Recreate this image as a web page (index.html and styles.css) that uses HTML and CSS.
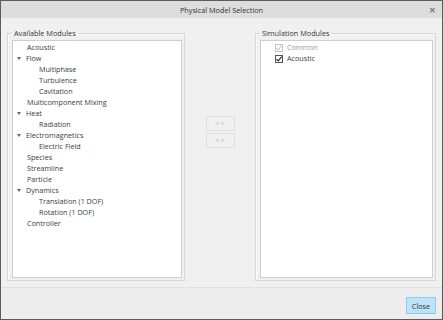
FILE: index.html
```html
<!DOCTYPE html>
<html>
<head>
<meta charset="utf-8">
<link rel="stylesheet" href="styles.css">
</head>
<body>
<div class="window">
  <div class="titlebar">
    <span class="title">Physical Model Selection</span>
    <span class="close-x">✕</span>
  </div>
  <div class="content">
    <fieldset class="group">
      <legend>Available Modules</legend>
      <div class="listbox">
        <div class="row l0">Acoustic</div>
        <div class="row l0 exp"><span class="arrow"></span>Flow</div>
        <div class="row l1">Multiphase</div>
        <div class="row l1">Turbulence</div>
        <div class="row l1">Cavitation</div>
        <div class="row l0">Multicomponent Mixing</div>
        <div class="row l0 exp"><span class="arrow"></span>Heat</div>
        <div class="row l1">Radiation</div>
        <div class="row l0 exp"><span class="arrow"></span>Electromagnetics</div>
        <div class="row l1">Electric Field</div>
        <div class="row l0">Species</div>
        <div class="row l0">Streamline</div>
        <div class="row l0">Particle</div>
        <div class="row l0 exp"><span class="arrow"></span>Dynamics</div>
        <div class="row l1">Translation (1 DOF)</div>
        <div class="row l1">Rotation (1 DOF)</div>
        <div class="row l0">Controller</div>
      </div>
    </fieldset>
    <div class="middle">
      <button class="mv">&gt; &gt;</button>
      <button class="mv">&lt; &lt;</button>
    </div>
    <fieldset class="group">
      <legend>Simulation Modules</legend>
      <div class="listbox">
        <div class="crow disabled"><span class="cb"><svg viewBox="0 0 8 8" width="8" height="8"><path d="M1.5 4.2 L3.2 6 L6.6 1.6" fill="none" stroke="#b8b8b8" stroke-width="1"/></svg></span>Common</div>
        <div class="crow"><span class="cb"><svg viewBox="0 0 8 8" width="8" height="8"><path d="M1.5 4.2 L3.2 6 L6.6 1.6" fill="none" stroke="#222" stroke-width="1.1"/></svg></span>Acoustic</div>
      </div>
    </fieldset>
  </div>
  <div class="footer">
    <button class="close-btn">Close</button>
  </div>
</div>
</body>
</html>
```

FILE: styles.css
```css
* { box-sizing: border-box; }
html, body { margin: 0; padding: 0; }
body {
  font-family: "Open Sans", "Noto Sans", sans-serif;
  font-size: 7.2px;
  color: #3c3c3c;
  background: #fff;
}
.window {
  width: 443px;
  height: 320px;
  border: 1px solid #5c5c5c;
  display: flex;
  flex-direction: column;
  background: #f0f0f0;
}
.titlebar {
  height: 17px;
  background: #dddddd;
  display: flex;
  align-items: center;
  justify-content: center;
  position: relative;
  font-size: 7.3px;
  color: #333;
}
.close-x {
  position: absolute;
  right: 6px;
  top: 3px;
  font-size: 8px;
  color: #777;
  font-weight: bold;
}
.content {
  flex: 1;
  display: grid;
  grid-template-columns: 178px 1fr 181px;
  padding: 9px 6px 6px 6px;
}
.group {
  margin: 0;
  min-width: 0;
  border: 1px solid #d6d6d6;
  box-shadow: inset 1px 1px 0 #fafafa;
  padding: 1px 2px 2px 4px;
  display: flex;
  flex-direction: column;
}
.group legend {
  padding: 0 2px;
  font-size: 7.3px;
  line-height: 12px;
  color: #333;
}
.listbox {
  flex: 1;
  background: #fff;
  border: 1px solid #cfcfcf;
  padding-top: 1px;
}
.row {
  height: 11px;
  line-height: 11px;
  white-space: nowrap;
  display: flex;
  align-items: center;
}
.l0 { padding-left: 14px; }
.l1 { padding-left: 26px; }
.row.exp { padding-left: 4px; }
.arrow {
  width: 0;
  height: 0;
  border-left: 2.5px solid transparent;
  border-right: 2.5px solid transparent;
  border-top: 3px solid #666;
  margin-right: 5px;
}
.crow {
  height: 11px;
  line-height: 11px;
  display: flex;
  align-items: center;
  padding-left: 14px;
}
.crow.disabled { color: #999; }
.cb {
  width: 8px;
  height: 8px;
  border: 1px solid #555;
  background: #fff;
  margin-right: 4px;
  display: flex;
  align-items: center;
  justify-content: center;
}
.cb svg { display: block; flex: none; }
.crow.disabled .cb { border-color: #c4c4c4; }
.middle {
  display: flex;
  flex-direction: column;
  align-items: center;
  padding-top: 89px;
  gap: 2px;
}
.mv {
  width: 29px;
  height: 15px;
  padding: 0;
  background: #f0f0f0;
  border: 1px solid #e0e0e0;
  color: #b4b4b4;
  font-family: "Open Sans", sans-serif;
  font-size: 6.5px;
  line-height: 13px;
}
.footer {
  height: 32px;
  border-top: 1px solid #e2e2e2;
  background: #ededee;
  display: flex;
  justify-content: flex-end;
  align-items: flex-start;
  padding: 9px 6px 0 0;
}
.close-btn {
  width: 30px;
  height: 17px;
  padding: 0;
  background: #bde3f8;
  border: 1px solid #8ccaf0;
  color: #333;
  font-family: "Open Sans", sans-serif;
  font-size: 7.3px;
}
```
